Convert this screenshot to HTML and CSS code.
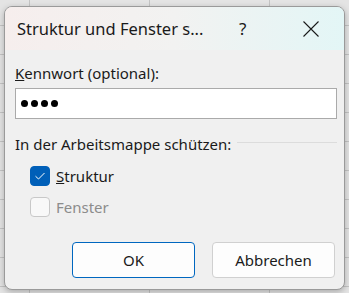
FILE: index.html
```html
<!DOCTYPE html>
<html lang="de">
<head>
  <meta charset="UTF-8" />
  <title>Struktur und Fenster schützen</title>
  <link rel="stylesheet" href="styles.css">
</head>
<body>
  <div class="window">
    <div class="titlebar">
      <span class="title">Struktur und Fenster s...</span>
      <span class="help">?</span>
      <span class="close">
        <svg width="16" height="16" viewBox="0 0 16 16">
          <path d="M0.5 0.5 L15.5 15.5 M15.5 0.5 L0.5 15.5" stroke="#1a1a1a" stroke-width="1.1" fill="none"/>
        </svg>
      </span>
    </div>
    <div class="content">
      <label class="field-label" for="kennwort"><u>K</u>ennwort (optional):</label>
      <div class="password">
        <span class="dot"></span><span class="dot"></span><span class="dot"></span><span class="dot"></span>
      </div>

      <div class="group-head">
        <span>In der Arbeitsmappe schützen:</span>
        <span class="rule"></span>
      </div>

      <div class="check-row">
        <span class="box checked">
          <svg width="12" height="10" viewBox="0 0 12 10">
            <path d="M1.5 5.2 L4.5 8 L10.5 2" stroke="#fff" stroke-width="1" fill="none"/>
          </svg>
        </span>
        <span><u>S</u>truktur</span>
      </div>
      <div class="check-row disabled">
        <span class="box"></span>
        <span>Fenster</span>
      </div>

      <div class="buttons">
        <button class="btn default">OK</button>
        <button class="btn">Abbrechen</button>
      </div>
    </div>
  </div>
</body>
</html>
```

FILE: styles.css
```css
body {
  margin: 0;
  padding: 6px 4px 0 4px;
  height: 293px;
  box-sizing: border-box;
  overflow: hidden;
  font-family: "Noto Sans", "Open Sans", sans-serif;
  font-size: 15px;
  color: #1a1a1a;
  background-color: #e4e4e4;
  background-image:
    repeating-linear-gradient(to bottom, transparent 0, transparent 25px, #c4c4c4 25px, #c4c4c4 26px, transparent 26px, transparent 29px),
    linear-gradient(to right, transparent 29px, #c4c4c4 29px, #c4c4c4 30px, transparent 30px, transparent 149px, #c4c4c4 149px, #c4c4c4 150px, transparent 150px, transparent 269px, #c4c4c4 269px, #c4c4c4 270px, transparent 270px);
}
.window {
  width: 341px;
  height: 284px;
  box-sizing: border-box;
  border: 1px solid #9a9a9a;
  border-radius: 8px;
  background-color: #f0f0f0;
  box-shadow: 0 2px 6px rgba(0,0,0,0.25);
  overflow: hidden;
}
.titlebar {
  height: 43px;
  display: flex;
  align-items: center;
  padding-left: 12px;
  background: linear-gradient(to right, #f6eeed, #f2f2f1 50%, #e3f6f6);
  font-size: 16.5px;
}
.title {
  width: 222px;
}
.help {
  width: 64px;
  font-size: 17px;
}
.close {
  display: flex;
}
.content {
  padding: 13px 9px 0 10px;
}
.field-label {
  display: block;
  line-height: 20px;
}
.password {
  margin-top: 5px;
  margin-right: -2px;
  height: 31px;
  box-sizing: border-box;
  border: 1px solid #aaaaaa;
  background-color: #fff;
  display: flex;
  align-items: center;
  gap: 3px;
  padding-left: 5px;
}
.dot {
  width: 7px;
  height: 7px;
  border-radius: 50%;
  background-color: #000;
}
.group-head {
  margin-top: 15px;
  margin-right: -2px;
  display: flex;
  align-items: center;
  gap: 6px;
  line-height: 20px;
}
.rule {
  flex: 1;
  height: 1px;
  background-color: #dcdcdc;
  margin-top: -4px;
}
.check-row {
  display: flex;
  align-items: center;
  gap: 6px;
  margin-left: 15px;
  height: 20px;
  margin-top: 12px;
}
.check-row + .check-row {
  margin-top: 11px;
}
.box {
  width: 20px;
  height: 20px;
  box-sizing: border-box;
  border: 1px solid #c8c8c8;
  border-radius: 4px;
  background-color: #f8f8f8;
  display: flex;
  align-items: center;
  justify-content: center;
}
.box.checked {
  background-color: #005fb8;
  border-color: #005fb8;
}
.disabled {
  color: #8c8c8c;
}
.buttons {
  display: flex;
  justify-content: flex-end;
  gap: 17px;
  margin-top: 25px;
}
.btn {
  width: 123px;
  height: 36px;
  font-family: inherit;
  font-size: 15px;
  color: #1a1a1a;
  background-color: #fdfdfd;
  border: 1px solid #d0d0d0;
  border-radius: 4px;
}
.btn.default {
  border-color: #0067c0;
}
```
